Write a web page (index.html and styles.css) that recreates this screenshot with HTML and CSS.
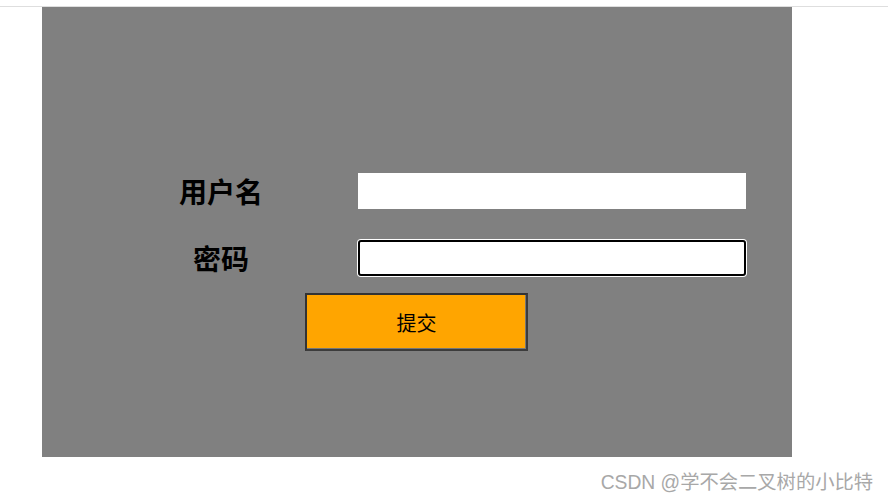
FILE: index.html
```html
<!DOCTYPE html>
<html lang="zh-CN">
<head>
    <meta charset="UTF-8">
    <meta name="viewport" content="width=device-width, initial-scale=1.0">
    <title>登录</title>
    <link rel="stylesheet" href="styles.css">
</head>
<body>
    <div class="topline"></div>
    <main class="box">
        <form class="login-form" onsubmit="return false;">
            <label class="label" for="username">用户名</label>
            <input class="field" type="text" id="username">
            <label class="label" for="password">密码</label>
            <input class="field focused" type="password" id="password">
            <div class="actions">
                <button class="submit" type="submit">提交</button>
            </div>
        </form>
    </main>
    <div class="watermark">CSDN @学不会二叉树的小比特</div>
</body>
</html>
```

FILE: styles.css
```css
body {
    margin: 0;
    background-color: #fff;
    font-family: "Noto Sans CJK SC", "Noto Sans", sans-serif;
    width: 888px;
    height: 501px;
    overflow: hidden;
}
.topline {
    height: 6px;
    border-bottom: 1px solid #dedede;
}
.box {
    width: 750px;
    height: 450px;
    margin-left: 42px;
    background-color: #808080;
    box-sizing: border-box;
    padding-top: 166px;
}
.login-form {
    display: grid;
    grid-template-columns: 202px 388px;
    column-gap: 36px;
    row-gap: 31px;
    margin-left: 78px;
    align-items: center;
}
.label {
    text-align: center;
    font-size: 28px;
    font-weight: bold;
    color: #000;
    line-height: 36px;
}
.field {
    width: 388px;
    height: 36px;
    box-sizing: border-box;
    border: 1px solid #fff;
    background-color: #fff;
    margin: 0;
    padding: 0 6px;
    outline: none;
}
.focused {
    border: 2px solid #000;
    border-radius: 3px;
    box-shadow: 0 0 0 1px #fff;
}
.actions {
    grid-column: 1 / span 2;
    margin-top: -14px;
    padding-left: 185px;
}
.submit {
    width: 223px;
    height: 58px;
    background-color: #ffa500;
    border: 2px solid #333;
    border-right-color: #3c3c3c;
    border-bottom-color: #3c3c3c;
    box-shadow: inset -1px -1px 0 #777;
    font-family: "Noto Sans CJK SC", sans-serif;
    font-size: 20px;
    color: #000;
    cursor: pointer;
}
.watermark {
    text-align: right;
    padding-right: 15px;
    margin-top: 10px;
    font-family: "Liberation Sans", "Noto Sans CJK SC", sans-serif;
    font-size: 19.3px;
    color: #a8a8a8;
}
```
